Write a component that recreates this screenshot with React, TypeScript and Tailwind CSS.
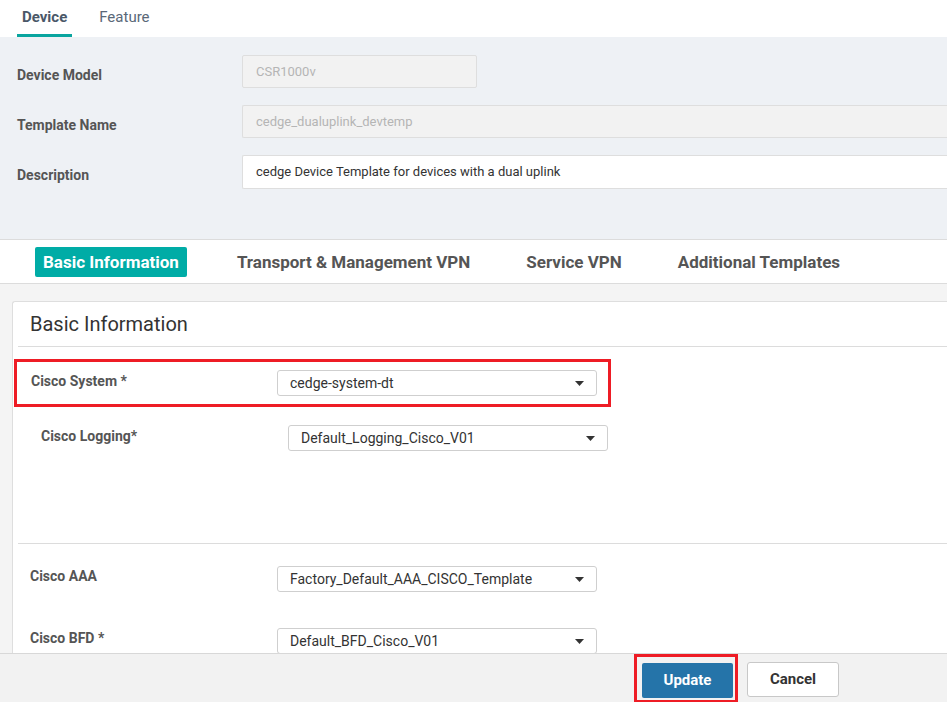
import { ReactNode } from 'react';

function Caret() {
  return (
    <svg width="9" height="5" viewBox="0 0 9 5" className="shrink-0">
      <path d="M0 0 L9 0 L4.5 5 Z" fill="#333" />
    </svg>
  );
}

function Select({ value }: { value: string }) {
  return (
    <div className="w-[320px] h-[26px] flex items-center justify-between pl-[12px] pr-[12px] bg-white border border-[#cfcfcf] rounded-[3px] text-[14px] text-[#333]">
      <span>{value}</span>
      <Caret />
    </div>
  );
}

function FieldRow({ label, children }: { label: string; children: ReactNode }) {
  return (
    <div className="flex items-center h-[33px]">
      <div className="w-[225px] shrink-0 pt-[7px] text-[14px] font-bold text-[#555]">{label}</div>
      {children}
    </div>
  );
}

export default function App() {
  const tabs = ['Transport & Management VPN', 'Service VPN', 'Additional Templates'];

  return (
    <div className="relative w-[947px] h-[702px] overflow-hidden bg-white font-['Roboto',sans-serif]">
      {/* Top tabs */}
      <div className="h-[37px] flex items-end bg-white">
        <div className="ml-[17px] px-[5px] pb-[6px] border-b-[3px] border-[#0aa59f] text-[15px] font-bold text-[#4a5868]">
          Device
        </div>
        <div className="ml-[27px] pb-[9px] text-[15px] text-[#5a6878]">Feature</div>
      </div>

      {/* Template header */}
      <div className="h-[203px] bg-[#eef1f5] pt-[18px] pl-[17px] flex flex-col gap-[17px] border-b border-[#dcdcdc]">
        <FieldRow label="Device Model">
          <div className="w-[235px] h-[33px] flex items-center pl-[13px] bg-[#f2f2f2] border border-[#dedede] rounded-[2px] text-[13px] text-[#b5b5b5]">
            CSR1000v
          </div>
        </FieldRow>
        <FieldRow label="Template Name">
          <div className="flex-1 h-[33px] flex items-center pl-[13px] bg-[#f2f2f2] border border-[#dedede] rounded-l-[2px] border-r-0 text-[13px] text-[#b5b5b5]">
            cedge_dualuplink_devtemp
          </div>
        </FieldRow>
        <FieldRow label="Description">
          <div className="flex-1 h-[34px] flex items-center pl-[13px] bg-white border border-[#dedede] rounded-l-[2px] border-r-0 text-[13px] text-[#333]">
            cedge Device Template for devices with a dual uplink
          </div>
        </FieldRow>
      </div>

      {/* Section tabs */}
      <div className="h-[44px] flex items-center bg-white border-b border-[#dcdcdc] pl-[35px]">
        <div className="h-[30px] px-[8px] pt-[2px] flex items-center rounded-[2px] bg-[#00aca6] text-[17px] font-bold text-white">
          Basic Information
        </div>
        <div className="flex items-center gap-[56px] ml-[50px] pt-[3px] text-[17px] font-bold text-[#555]">
          {tabs.map(t => (
            <span key={t}>{t}</span>
          ))}
        </div>
      </div>

      {/* Body */}
      <div className="bg-[#f4f4f4] pt-[17px] pl-[12px] h-full">
        <div className="bg-white border-l border-t border-[#dedede] rounded-tl-[3px] h-full">
          <div className="h-[45px] ml-[5px] flex items-center pl-[12px] border-b border-[#dcdcdc] text-[20px] text-[#333]">
            Basic Information
          </div>

          <div className="pt-[12px]">
            <div className="ml-[1px] w-[597px] h-[48px] border-[3px] border-[#ee1c25] flex items-center pl-[14px]">
              <div className="w-[246px] shrink-0 self-start pt-[9px] text-[14px] font-bold text-[#555]">Cisco System *</div>
              <Select value="cedge-system-dt" />
            </div>

            <div className="flex items-start mt-[18px] pl-[28px]">
              <div className="w-[247px] shrink-0 pt-[1px] text-[14px] font-bold text-[#555]">Cisco Logging*</div>
              <Select value="Default_Logging_Cisco_V01" />
            </div>

            <div className="h-[93px] ml-[5px] border-b border-[#dcdcdc]" />

            <div className="flex items-center mt-[22px] pl-[17px]">
              <div className="w-[247px] shrink-0 -mt-[6px] text-[14px] font-bold text-[#555]">Cisco AAA</div>
              <Select value="Factory_Default_AAA_CISCO_Template" />
            </div>

            <div className="flex items-center mt-[36px] pl-[17px]">
              <div className="w-[247px] shrink-0 -mt-[6px] text-[14px] font-bold text-[#555]">Cisco BFD *</div>
              <Select value="Default_BFD_Cisco_V01" />
            </div>
          </div>
        </div>
      </div>

      {/* Footer actions */}
      <div className="absolute left-0 right-0 bottom-0 h-[49px] bg-[#f2f2f2] border-t border-[#d8d8d8] flex items-start">
        <div className="ml-[634px] w-[104px] h-[49px] border-[3px] border-[#ee1c25] pl-[5px] pt-[6px]">
          <div className="w-[91px] h-[35px] flex items-center justify-center rounded-[2px] bg-[#2574a9] text-[15px] font-bold text-white">
            Update
          </div>
        </div>
        <div className="ml-[9px] mt-[8px] w-[92px] h-[35px] flex items-center justify-center rounded-[3px] bg-white border border-[#c8c8c8] text-[15px] font-bold text-[#333]">
          Cancel
        </div>
      </div>
    </div>
  );
}
